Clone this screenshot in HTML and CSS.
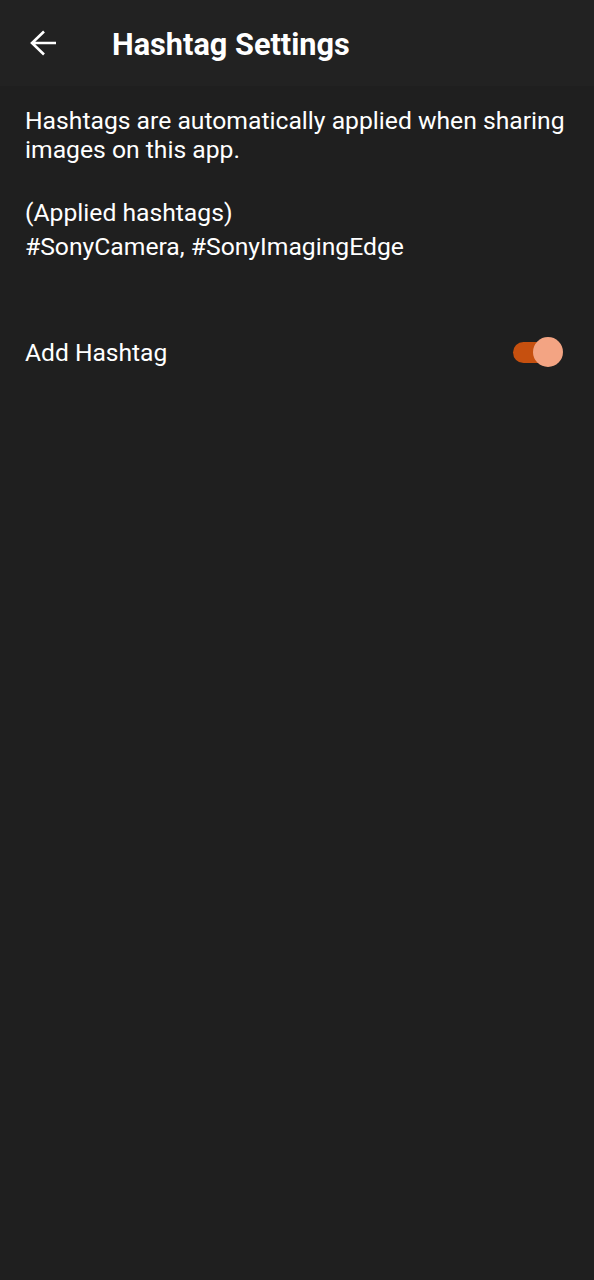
FILE: index.html
```html
<!DOCTYPE html>
<html>
<head>
<meta charset="utf-8">
<link rel="stylesheet" href="styles.css">
</head>
<body>
<header class="appbar">
  <button class="back" aria-label="Back">
    <svg width="28" height="28" viewBox="0 0 28 28"><path d="M27 14H3M15 2.5L3 14l12 11.5" fill="none" stroke="#ffffff" stroke-width="2.6" stroke-linecap="butt" stroke-linejoin="miter"/></svg>
  </button>
  <h1 class="title">Hashtag Settings</h1>
</header>
<main class="content">
  <p class="desc">Hashtags are automatically applied when sharing images on this app.</p>
  <p class="applied">(Applied hashtags)<br>#SonyCamera, #SonyImagingEdge</p>
  <div class="row">
    <span class="label">Add Hashtag</span>
    <span class="switch"><span class="track"></span><span class="thumb"></span></span>
  </div>
</main>
</body>
</html>
```
FILE: styles.css
```css
html, body {
  margin: 0;
  padding: 0;
  background: #1f1f1f;
  color: #ffffff;
  font-family: Roboto, "Noto Sans", sans-serif;
  height: 100%;
}
.appbar {
  height: 86px;
  background: #222222;
  display: flex;
  align-items: center;
}
.back {
  background: none;
  border: 0;
  padding: 0;
  margin-left: 29px;
  width: 28px;
  height: 28px;
  display: flex;
}
.title {
  margin: 0 0 0 55px;
  font-size: 30.7px;
  font-weight: 700;
  line-height: 36px;
  padding-top: 3px;
}
.content {
  padding: 0 25px;
}
.desc {
  margin: 20px 0 0;
  font-size: 24.7px;
  line-height: 29px;
}
.applied {
  margin: 32px 0 0;
  font-size: 24.7px;
  line-height: 34px;
}
.row {
  margin-top: 68px;
  display: flex;
  align-items: center;
  justify-content: space-between;
  height: 40px;
}
.label {
  font-size: 24.6px;
}
.switch {
  position: relative;
  width: 50px;
  height: 30px;
  margin-right: 6px;
}
.track {
  position: absolute;
  left: 0;
  top: 5px;
  width: 48px;
  height: 21px;
  border-radius: 11px;
  background: #c6500f;
}
.thumb {
  position: absolute;
  right: 0;
  top: 0;
  width: 30px;
  height: 30px;
  border-radius: 50%;
  background: #f3a483;
}
```
